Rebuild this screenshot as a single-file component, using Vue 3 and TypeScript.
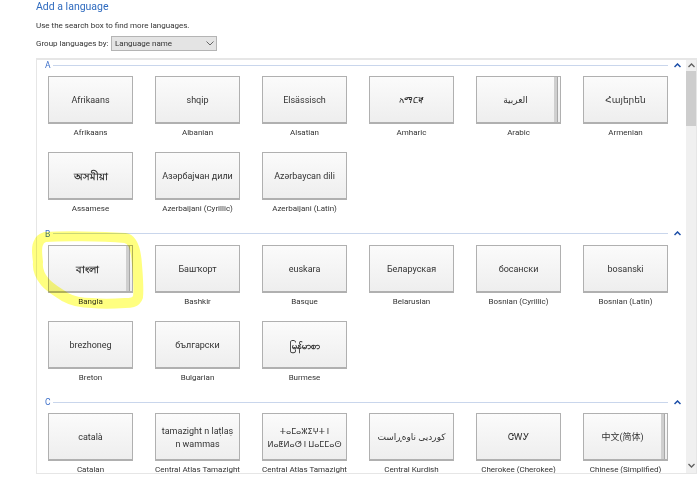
<script setup lang="ts">
interface Lang {
  native: string
  name: string
  stacked?: boolean
  small?: boolean
  heavy?: boolean
}

interface Group {
  letter: string
  langs: Lang[]
}

const groups: Group[] = [
  {
    letter: 'A',
    langs: [
      { native: 'Afrikaans', name: 'Afrikaans' },
      { native: 'shqip', name: 'Albanian' },
      { native: 'Elsässisch', name: 'Alsatian' },
      { native: 'አማርኛ', name: 'Amharic' },
      { native: 'العربية', name: 'Arabic', stacked: true },
      { native: 'Հայերեն', name: 'Armenian' },
      { native: 'অসমীয়া', name: 'Assamese', heavy: true },
      { native: 'Азәрбајҹан дили', name: 'Azerbaijani (Cyrillic)' },
      { native: 'Azərbaycan dili', name: 'Azerbaijani (Latin)' },
    ],
  },
  {
    letter: 'B',
    langs: [
      { native: 'বাংলা', name: 'Bangla', stacked: true, heavy: true },
      { native: 'Башҡорт', name: 'Bashkir' },
      { native: 'euskara', name: 'Basque' },
      { native: 'Беларуская', name: 'Belarusian' },
      { native: 'босански', name: 'Bosnian (Cyrillic)' },
      { native: 'bosanski', name: 'Bosnian (Latin)' },
      { native: 'brezhoneg', name: 'Breton' },
      { native: 'български', name: 'Bulgarian' },
      { native: 'မြန်မာစာ', name: 'Burmese', heavy: true },
    ],
  },
  {
    letter: 'C',
    langs: [
      { native: 'català', name: 'Catalan' },
      { native: 'tamazight n laṭlaṣ n wammas', name: 'Central Atlas Tamazight' },
      { native: 'ⵜⴰⵎⴰⵣⵉⵖⵜ ⵏ ⵍⴰⵟⵍⴰⵚ ⵏ ⵡⴰⵎⵎⴰⵙ', name: 'Central Atlas Tamazight', small: true },
      { native: 'کوردیی ناوەڕاست', name: 'Central Kurdish' },
      { native: 'ᏣᎳᎩ', name: 'Cherokee (Cherokee)' },
      { native: '中文(简体)', name: 'Chinese (Simplified)', stacked: true },
    ],
  },
]
</script>

<template>
  <div class="page">
    <h1 class="title">Add a language</h1>
    <p class="hint">Use the search box to find more languages.</p>
    <div class="group-by">
      <span class="group-label">Group languages by:</span>
      <div class="select">
        <span>Language name</span>
        <svg width="8" height="5" viewBox="0 0 8 5"><path d="M.5.5 4 4 7.5.5" fill="none" stroke="#666" stroke-width="1" /></svg>
      </div>
    </div>

    <div class="panel">
      <div class="list">
        <section v-for="group in groups" :key="group.letter" class="group">
          <header class="group-head">
            <span class="letter">{{ group.letter }}</span>
            <span class="rule"></span>
            <svg class="collapse" width="7" height="5" viewBox="0 0 7 5"><path d="M.5 4 3.5 1 6.5 4" fill="none" stroke="#1c4fa8" stroke-width="1.5" /></svg>
          </header>
          <div class="tiles">
            <div v-for="lang in group.langs" :key="lang.native" class="cell">
              <div class="tile" :class="{ stacked: lang.stacked, small: lang.small, heavy: lang.heavy }">{{ lang.native }}</div>
              <div class="name">{{ lang.name }}</div>
            </div>
          </div>
        </section>
      </div>
      <div class="scrollbar">
        <svg class="arrow" width="7" height="5" viewBox="0 0 7 5"><path d="M.5 4 3.5 1 6.5 4" fill="none" stroke="#606060" stroke-width="1.3" /></svg>
        <div class="thumb"></div>
        <svg class="arrow down" width="7" height="5" viewBox="0 0 7 5"><path d="M.5 1 3.5 4 6.5 1" fill="none" stroke="#606060" stroke-width="1.3" /></svg>
      </div>
    </div>

    <svg class="marker" width="700" height="480" viewBox="0 0 700 480">
      <path
        d="M45 237 C62 236 100 236 125 238 C132 239 136 248 137 265 C138 278 139 288 138 297 C136 303 130 303 125 303 C112 304 100 304 92 303 C80 303 72 301 65 297 C56 291 50 288 45 282 C40 276 37 270 38 262 C37 254 36 246 39 242 C40 239 42 238 45 237"
        fill="none"
        stroke="#ffff80"
        stroke-width="10"
        stroke-linecap="round"
      />
    </svg>
  </div>
</template>

<style scoped>
.page {
  position: relative;
  width: 700px;
  height: 480px;
  overflow: hidden;
  box-sizing: border-box;
  padding: 0 3px 0 36px;
  background: #fff;
  font-family: Roboto, "DejaVu Sans", "Noto Sans", "Noto Sans CJK SC", sans-serif;
  color: #333;
}

.title {
  margin: 0;
  font-size: 10.5px;
  line-height: 13px;
  font-weight: 400;
  color: #2f6bbf;
}

.hint {
  margin: 7px 0 0;
  font-size: 8px;
  line-height: 11px;
}

.group-by {
  display: flex;
  align-items: center;
  margin-top: 5px;
  font-size: 8px;
}

.group-label {
  width: 75px;
}

.select {
  display: flex;
  align-items: center;
  justify-content: space-between;
  box-sizing: border-box;
  width: 106px;
  height: 15px;
  padding: 0 2px 0 3px;
  border: 1px solid #b4b4b4;
  background: #e4e4e4;
}

.panel {
  display: flex;
  box-sizing: border-box;
  height: 416px;
  margin-top: 7px;
  border: 1px solid #e6e6e6;
  border-top-width: 2px;
  overflow: hidden;
}

.list {
  flex: 1;
  min-width: 0;
  padding: 0 5px 0 8px;
}

.group {
  height: 168.5px;
}

.group-head {
  display: flex;
  align-items: center;
  height: 10px;
  margin-bottom: 6px;
  font-size: 8.5px;
}

.letter {
  color: #3d6fc9;
  width: 8px;
}

.rule {
  flex: 1;
  height: 1px;
  background: #c9d6ec;
}

.collapse {
  margin-left: 6px;
}

.tiles {
  display: grid;
  grid-template-columns: repeat(6, 107px);
  grid-auto-rows: 76.25px;
  padding-left: 3px;
}

.cell {
  width: 85px;
  text-align: center;
}

.tile {
  position: relative;
  display: flex;
  align-items: center;
  justify-content: center;
  box-sizing: border-box;
  height: 48px;
  padding: 2px 4px 0;
  border: 1px solid #b0b0b0;
  border-bottom-width: 2px;
  background: linear-gradient(#fbfbfb, #eeeeee);
  font-size: 9px;
  line-height: 13px;
}

.tile.small {
  font-size: 8px;
  padding: 2px 2px 0;
}

.tile.heavy {
  font-weight: 700;
  font-size: 9.5px;
}

.tile.stacked {
  padding-right: 10px;
}

.tile.stacked::after {
  content: "";
  position: absolute;
  top: 0;
  bottom: 0;
  right: 2px;
  width: 0;
  border-left: 3px solid #cfcfcf;
  border-right: 1px solid #a8a8a8;
}

.name {
  margin-top: 3px;
  font-size: 8px;
  line-height: 12px;
  white-space: nowrap;
}

.scrollbar {
  position: relative;
  flex: none;
  width: 10px;
  background: #f0f0f0;
}

.arrow {
  position: absolute;
  left: 2px;
  top: 3px;
}

.arrow.down {
  top: auto;
  bottom: 5px;
}

.thumb {
  position: absolute;
  top: 11px;
  left: 0;
  right: 0;
  height: 55px;
  background: #cdcdcd;
}

.marker {
  position: absolute;
  inset: 0;
  pointer-events: none;
  mix-blend-mode: multiply;
}
</style>
